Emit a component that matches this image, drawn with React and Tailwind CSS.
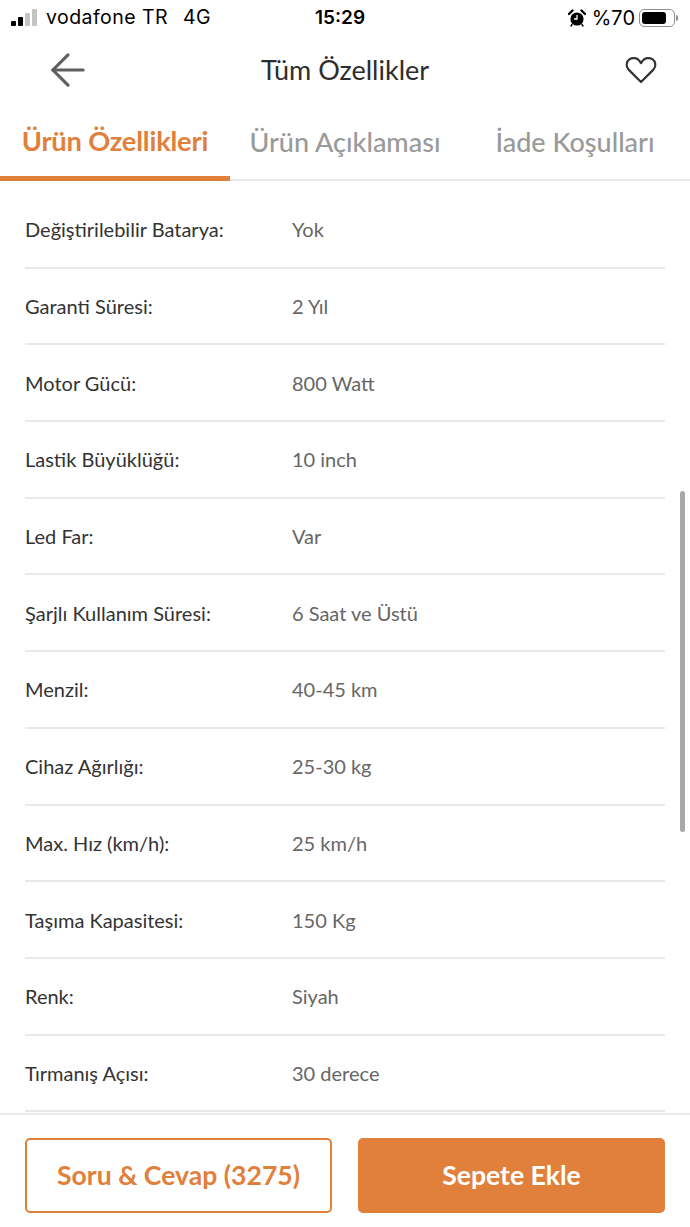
import { ArrowLeft } from "lucide-react";

const SPECS = [
  { label: "Değiştirilebilir Batarya:", value: "Yok" },
  { label: "Garanti Süresi:", value: "2 Yıl" },
  { label: "Motor Gücü:", value: "800 Watt" },
  { label: "Lastik Büyüklüğü:", value: "10 inch" },
  { label: "Led Far:", value: "Var" },
  { label: "Şarjlı Kullanım Süresi:", value: "6 Saat ve Üstü" },
  { label: "Menzil:", value: "40-45 km" },
  { label: "Cihaz Ağırlığı:", value: "25-30 kg" },
  { label: "Max. Hız (km/h):", value: "25 km/h" },
  { label: "Taşıma Kapasitesi:", value: "150 Kg" },
  { label: "Renk:", value: "Siyah" },
  { label: "Tırmanış Açısı:", value: "30 derece" },
];

function StatusBar() {
  return (
    <div className="h-[35px] shrink-0 flex items-center justify-between pl-[11px] pr-[12px] text-black font-['Inter',sans-serif] relative">
      <div className="flex items-center">
        <div className="flex items-end gap-[2px] h-[18px] pb-[1px]">
          <span className="w-[5px] h-[5px] rounded-[1px] bg-black" />
          <span className="w-[5px] h-[9px] rounded-[1px] bg-black" />
          <span className="w-[5px] h-[13px] rounded-[1px] bg-[#c4c4c4]" />
          <span className="w-[5px] h-[17px] rounded-[1px] bg-[#c4c4c4]" />
        </div>
        <span className="ml-[9px] text-[19.5px] tracking-[0.45px]">vodafone TR</span>
        <span className="ml-[15px] text-[19.5px] tracking-[0.45px]">4G</span>
      </div>
      <span className="absolute left-[315px] top-[5px] text-[19px] font-semibold leading-[25px]">15:29</span>
      <div className="flex items-center">
        <svg width="18" height="18" viewBox="0 0 18 18">
          <circle cx="9" cy="10" r="6.6" fill="#000" />
          <path d="M9 6v4H6" stroke="#fff" strokeWidth="1.3" fill="none" />
          <path d="M1 5 4.5 1.5M17 5l-3.5-3.5" stroke="#000" strokeWidth="2.4" strokeLinecap="round" />
          <path d="M4 15.5 3 17M14 15.5l1 1.5" stroke="#000" strokeWidth="1.4" strokeLinecap="round" />
        </svg>
        <span className="ml-[6px] text-[20px]">%70</span>
        <div className="ml-[4px] w-[36px] h-[18px] rounded-[5px] border border-[#8e8e8e] p-[2px]">
          <div className="w-[24px] h-full rounded-[3px] bg-black" />
        </div>
        <span className="ml-[1px] w-[2px] h-[6px] rounded-r-sm bg-[#8e8e8e]" />
      </div>
    </div>
  );
}

function Header() {
  return (
    <div className="h-[70px] shrink-0 grid grid-cols-[1fr_auto_1fr] items-center px-[33px]">
      <ArrowLeft size={52} strokeWidth={1.45} className="text-[#5f5f5f] ml-[9px]" />
      <h1 className="text-[27px] font-normal text-[#2d2d2d]">Tüm Özellikler</h1>
      <svg className="justify-self-end" width="32" height="28" viewBox="0 0 32 28" fill="none" stroke="#333" strokeWidth="2.2" strokeLinejoin="round">
        <path d="M16 26 3.6 13.6C.6 10.4 1.2 5.6 4.6 3.2c3.4-2.2 7.8-1 9.8 1.6L16 7l1.6-2.2c2-2.6 6.4-3.8 9.8-1.6 3.4 2.4 4 7.2 1 10.4L16 26Z" />
      </svg>
    </div>
  );
}

function Tabs() {
  return (
    <div className="h-[76px] shrink-0 grid grid-cols-3 border-b-2 border-[#e8e8e8] text-[27px]">
      <div className="relative flex items-center justify-center pb-[3px] font-bold text-[#e0803a] -mb-[2px] border-b-[5px] border-[#e0803a] pt-[5px]">
        <span className="text-[27.3px] tracking-[-0.2px]">Ürün Özellikleri</span>
      </div>
      <div className="flex items-center justify-center text-[#9a9a9a] font-medium">Ürün Açıklaması</div>
      <div className="flex items-center justify-center text-[#9a9a9a] font-medium">İade Koşulları</div>
    </div>
  );
}

export default function App() {
  return (
    <div className="relative w-[690px] h-[1227px] overflow-hidden bg-white flex flex-col font-['Lato',sans-serif]">
      <StatusBar />
      <Header />
      <Tabs />
      <div className="flex-1 overflow-hidden px-[25px] pt-[11px]">
        {SPECS.map((s) => (
          <div key={s.label} className="h-[76.7px] flex items-center border-b-2 border-[#e8e8e8] text-[20px]">
            <span className="w-[267px] text-[#333]">{s.label}</span>
            <span className="text-[#666]">{s.value}</span>
          </div>
        ))}
      </div>
      <div className="absolute left-[680px] top-[491px] w-[5px] h-[341px] rounded-full bg-[#a8a8a8]" />
      <div className="h-[114px] shrink-0 border-t-2 border-[#e8e8e8] px-[25px] pt-[23px] flex gap-[26px] bg-white">
        <button className="w-[307px] h-[75px] pt-[1px] rounded-[5px] border-2 border-[#e0803a] text-[#e0803a] text-[26.6px] font-bold">Soru &amp; Cevap (3275)</button>
        <button className="w-[307px] h-[75px] pt-[1px] rounded-[5px] bg-[#e0803a] text-white text-[26.6px] font-bold">Sepete Ekle</button>
      </div>
    </div>
  );
}
